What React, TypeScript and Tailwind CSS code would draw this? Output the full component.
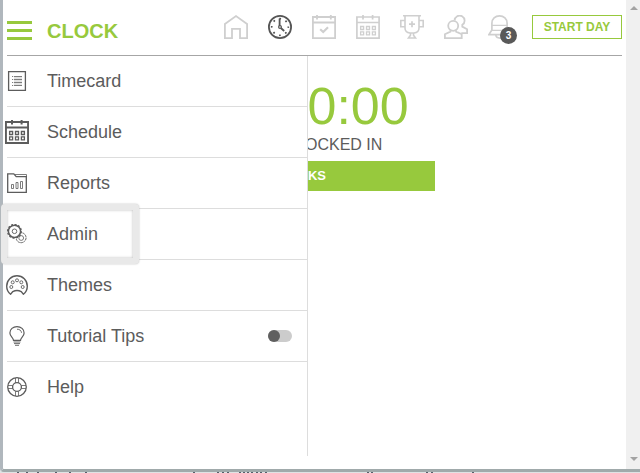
import { useState } from "react";
import type { ReactNode } from "react";

type IconProps = { className?: string };

function HomeIcon() {
  return (
    <svg viewBox="0 0 24 24" className="size-6" fill="none" stroke="currentColor" strokeWidth="1.8">
      <path d="M.9 23.1V9L12 1.100 23.100 9v14.100h-7.100v-9.200H8v9.200z" />
    </svg>
  );
}

function ClockIcon() {
  return (
    <svg viewBox="0 0 24 24" className="size-6" fill="none" stroke="currentColor">
      <circle cx="12" cy="12" r="11.1" strokeWidth="1.8" />
      <path d="M11.6 3.5v7.5M12.8 13l3.4 3" strokeWidth="1.8" />
      <circle cx="12" cy="12" r="1.4" strokeWidth="1.2" />
      <circle cx="12" cy="12" r="8.3" strokeWidth="1.7" strokeDasharray="1.7 4.818" strokeDashoffset=".85" />
    </svg>
  );
}

function CalendarCheckIcon() {
  return (
    <svg viewBox="0 0 24 24" className="size-6" fill="none" stroke="currentColor" strokeWidth="1.8">
      <path d="M.9 2h22.200v21.100H.9zM.9 7.500h22.200M5 0v4.400M18.800 0v4.400" />
      <path d="m8.200 14.300 3 2.700 4.800-4.700" strokeWidth="2.200" />
    </svg>
  );
}

function CalendarIcon({ className = "size-6 stroke-[1.7]" }: IconProps) {
  return (
    <svg viewBox="0 0 24 24" className={className} fill="none" stroke="currentColor">
      <path d="M.9 2h22.200v21.100H.9zM.9 7.500h22.200M7 0v4.400M16.600 0v4.400" />
      <path
        d="M4.600 11.500h3v3h-3zM10.500 11.500h3v3h-3zM16.400 11.500h3v3h-3zM4.600 16.800h3v3h-3zM10.500 16.800h3v3h-3zM16.400 16.800h3v3h-3z"
        strokeWidth="1.3"
      />
    </svg>
  );
}

function TrophyIcon() {
  return (
    <svg viewBox="0 0 24 24" className="size-6" fill="none" stroke="currentColor" strokeWidth="1.6">
      <path d="M3 .8h18M5 1v12q0 4.500 5 5h4q5-.5 5-5V1" />
      <path d="M5 5.500H.8v6.200H5M19 5.500h4.200v6.200H19M10.500 18v2.300L8.500 23h7l-2-2.700V18" />
      <path d="M12 6.200v6M9 9.200h6" strokeWidth="1.700" />
    </svg>
  );
}

function UsersIcon() {
  return (
    <svg viewBox="0 0 24 24" className="size-6" fill="none" stroke="currentColor" strokeWidth="1.8">
      <circle cx="9.200" cy="10.800" r="5" />
      <path d="M6.400 15.200v1.400L.9 19.200v3.900h16.800v-3.900l-5.600-2.600v-1.400" />
      <path d="M10.600 5.400a5 5 0 1 1 7.700 4.400v1.800l4.800 2.600v4h-5.800" />
    </svg>
  );
}

function BellIcon() {
  return (
    <svg viewBox="0 0 24 24" className="size-6" fill="none" stroke="currentColor" strokeWidth="1.7">
      <path d="M3.900 15V8.200C3.900 4 7.200.9 11.500.9s7.600 3.100 7.600 7.300V15l3 4.600H.9z" />
      <path d="M4 10.300h15M4 15.300h15" strokeWidth="1.200" />
      <path d="M7.800 20q.4 3.100 4 3.100t4-3.100" />
    </svg>
  );
}

function TimecardIcon() {
  return (
    <svg viewBox="0 0 20 20" className="size-5" fill="none" stroke="currentColor">
      <path d="M1.600.6h16.800v18.800H1.600z" strokeWidth="1.300" />
      <path d="M5 5.500h1.200M5 8.500h1.200M5 11.500h1.200M5 14.500h1.200M7 5.500h8M7 8.500h8M7 11.500h8M7 14.500h8" strokeOpacity=".8" />
      <path d="M7 7h8M7 10h8M7 13h8" strokeOpacity=".35" />
    </svg>
  );
}

function ReportsIcon() {
  return (
    <svg viewBox="0 0 20 20" className="size-5" fill="none" stroke="currentColor">
      <path d="M.7 19.300V.9h6.100l2.400 2.800h10.100v15.600z" strokeWidth="1.300" />
      <path d="M8 1.500h11.500V4" strokeWidth=".8" />
      <path d="M4.500 11.500h2v4h-2zM9 9.500h2v6H9zM13.500 8.500h2v7h-2z" strokeWidth=".8" />
    </svg>
  );
}

function AdminIcon() {
  return (
    <svg viewBox="0 0 20 20" className="size-5" fill="none" stroke="currentColor">
      <circle cx="7.500" cy="7.300" r="6.100" strokeWidth="1.500" />
      <circle cx="7.500" cy="7.300" r="6.900" strokeWidth="1.200" strokeDasharray="2 1.600" />
      <circle cx="7.500" cy="7.300" r="2.300" strokeWidth=".9" />
      <path d="M15.500 8.900a5 5 0 1 1-6.200 6.300" strokeWidth="1" strokeDasharray="2.400 .7" />
      <circle cx="14.200" cy="14" r="2.400" strokeWidth=".8" />
    </svg>
  );
}

function ThemesIcon() {
  return (
    <svg viewBox="0 0 22 20" className="h-5 w-[22px] shrink-0" fill="none" stroke="currentColor">
      <path
        d="M4.600 19.200C2.200 17.300.7 14.500.7 11.200.7 5.200 5.300.7 11 .7s10.300 4.500 10.300 10.500c0 3.300-1.500 6.100-3.900 8l-2.200-2.600q-4.200-2.300-8.400 0z"
        strokeWidth="1.400"
      />
      <g strokeWidth=".9">
        <circle cx="5.300" cy="12" r="1.500" />
        <circle cx="6.700" cy="7.300" r="1.500" />
        <circle cx="11" cy="5.300" r="1.500" />
        <circle cx="15.300" cy="7.300" r="1.500" />
        <circle cx="16.700" cy="12" r="1.500" />
      </g>
    </svg>
  );
}

function BulbIcon() {
  return (
    <svg viewBox="0 0 20 20" className="size-5" fill="none" stroke="currentColor">
      <path
        d="M6.500 14.400C6.300 11.500 2.900 10.500 2.900 6.900 2.900 3.300 6 .6 10 .6s7.100 2.700 7.100 6.300c0 3.600-3.400 4.600-3.600 7.500z"
        strokeWidth="1.200"
      />
      <path d="M10 3.200c2.600 0 4.300 1.300 4.500 3.600M6.500 16h7M7 17.600h6M8 19.300h4" strokeWidth=".9" />
    </svg>
  );
}

function HelpIcon() {
  return (
    <svg viewBox="0 0 20 20" className="size-5" fill="none" stroke="currentColor">
      <circle cx="10" cy="10" r="9.300" strokeWidth="1.300" />
      <circle cx="10" cy="10" r="4.400" strokeWidth="1.300" />
      <path
        d="M8.500 1v4.800M11.500 1v4.800M8.500 14.200V19M11.500 14.200V19M1 8.500h4.800M1 11.500h4.800M14.200 8.500H19M14.200 11.500H19"
        strokeWidth=".8"
      />
    </svg>
  );
}

const NAV: { label: string; icon: ReactNode; active?: boolean; badge?: number }[] = [
  { label: "Home", icon: <HomeIcon /> },
  { label: "Clock", icon: <ClockIcon />, active: true },
  { label: "Tasks", icon: <CalendarCheckIcon /> },
  { label: "Calendar", icon: <CalendarIcon /> },
  { label: "Awards", icon: <TrophyIcon /> },
  { label: "People", icon: <UsersIcon /> },
  { label: "Notifications", icon: <BellIcon />, badge: 3 },
];

const MENU: { label: string; icon: ReactNode; focused?: boolean }[] = [
  { label: "Timecard", icon: <TimecardIcon /> },
  { label: "Schedule", icon: <CalendarIcon className="size-6 shrink-0 stroke-2" /> },
  { label: "Reports", icon: <ReportsIcon /> },
  { label: "Admin", icon: <AdminIcon />, focused: true },
  { label: "Themes", icon: <ThemesIcon /> },
];

// tops of the text lines on the page behind the window
const BEHIND = [17, 26, 37, 55, 69, 85, 193, 217, 222, 227, 239, 243, 247, 251, 256, 260, 265, 367, 371, 426, 431, 472];

function IconSlot({ children }: { children: ReactNode }) {
  return <span className="mr-5 flex w-5 justify-center">{children}</span>;
}

export default function App() {
  const [tips, setTips] = useState(false);

  return (
    <div className="flex min-h-screen flex-col bg-[#dfe3e4] font-['Liberation_Sans',Arial,sans-serif] text-[#5c5c5c]">
      <div className="flex flex-1 rounded-bl border-b-3 border-l-3 border-b-[#a0aaab] border-l-[#b0b7bd] bg-white">
        <div className="flex min-w-0 flex-1 flex-col px-1">
          <header className="flex h-14 shrink-0 items-center border-b border-[#a6a6a6] pb-px">
            <button aria-label="Menu" className="flex w-[25px] flex-col gap-[5px] pt-1.5">
              <span className="h-[3px] w-full bg-[#97c93d]" />
              <span className="h-[3px] w-full bg-[#97c93d]" />
              <span className="h-[3px] w-full bg-[#97c93d]" />
            </button>
            <h1 className="pt-2 pl-[15px] text-xl font-bold text-[#97c93d]">CLOCK</h1>

            <nav className="ml-auto flex gap-5">
              {NAV.map(({ label, icon, active, badge }) => (
                <a
                  key={label}
                  href="#"
                  aria-label={label}
                  className={`relative ${active ? "text-[#555555]" : "text-[#cfcfcf]"}`}
                >
                  {icon}
                  {badge && (
                    <span className="absolute top-3 left-3 flex size-[17px] items-center justify-center rounded-full bg-[#595959] text-[10px] font-bold text-white">
                      {badge}
                    </span>
                  )}
                </a>
              ))}
            </nav>
            <button className="ml-5 h-6 w-[90px] border border-[#97c93d] text-xs font-bold whitespace-nowrap text-[#97c93d]">
              START DAY
            </button>
          </header>

          <div className="relative flex-1 pb-[13px]">
            {/* Clock page, partly under the drawer */}
            <main className="absolute inset-x-0 top-0 flex flex-col items-center pt-5">
              <div className="pr-3.5 text-[52px] leading-15 whitespace-nowrap text-[#97c93d]">00:00:00</div>
              <div className="text-base leading-[18px] whitespace-nowrap">NOT CLOCKED IN</div>
              <button className="mt-[7px] h-[30px] w-[241px] bg-[#97c93d] pr-5 text-[13px] font-bold text-white">
                TASKS
              </button>
            </main>

            {/* Drawer */}
            <ul className="relative h-full w-[301px] border-r border-[#dddddd] bg-white pb-11 text-lg">
              {MENU.map(({ label, icon, focused }) => (
                <li key={label} className="relative h-[51px] border-b border-[#dddddd]">
                  {focused && (
                    <span className="absolute -top-[5px] -left-[6px] h-[60px] w-[138px] rounded border-6 border-[#e9e9e9] bg-white shadow-[0_0_2px_#bbbbbb,inset_0_0_3px_#bbbbbb]" />
                  )}
                  <a href="#" className="relative flex h-full items-center">
                    <IconSlot>{icon}</IconSlot>
                    {label}
                  </a>
                </li>
              ))}
              <li className="h-[51px] border-b border-[#dddddd]">
                <label className="flex h-full items-center pr-[15px]">
                  <IconSlot>
                    <BulbIcon />
                  </IconSlot>
                  Tutorial Tips
                  <input
                    type="checkbox"
                    role="switch"
                    checked={tips}
                    onChange={(e) => setTips(e.target.checked)}
                    className="ml-auto flex h-3 w-6 appearance-none rounded-full bg-[#cccccc] before:size-3 before:rounded-full before:bg-[#606060] checked:justify-end"
                  />
                </label>
              </li>
              <li className="h-[50px]">
                <a href="#" className="flex h-full items-center">
                  <IconSlot>
                    <HelpIcon />
                  </IconSlot>
                  Help
                </a>
              </li>
            </ul>
          </div>
        </div>

        {/* Scroll track */}
        <div className="flex w-3.5 shrink-0 flex-col items-end justify-between bg-[#f0f0f0] pt-1.5 pb-2 text-[#a3a3a3]">
          <svg viewBox="0 0 8 4" className="mr-0.5 h-1 w-2" fill="currentColor">
            <path d="M0 4 4 0l4 4z" />
          </svg>
          <svg viewBox="0 0 8 4" className="mr-0.5 h-1 w-2" fill="currentColor">
            <path d="m0 0 4 4 4-4z" />
          </svg>
        </div>
      </div>

      <svg className="block h-px w-full shrink-0" fill="#55606b" aria-hidden="true">
        {BEHIND.map((x) => (
          <rect key={x} x={x} width="2" height="1" />
        ))}
      </svg>
    </div>
  );
}
